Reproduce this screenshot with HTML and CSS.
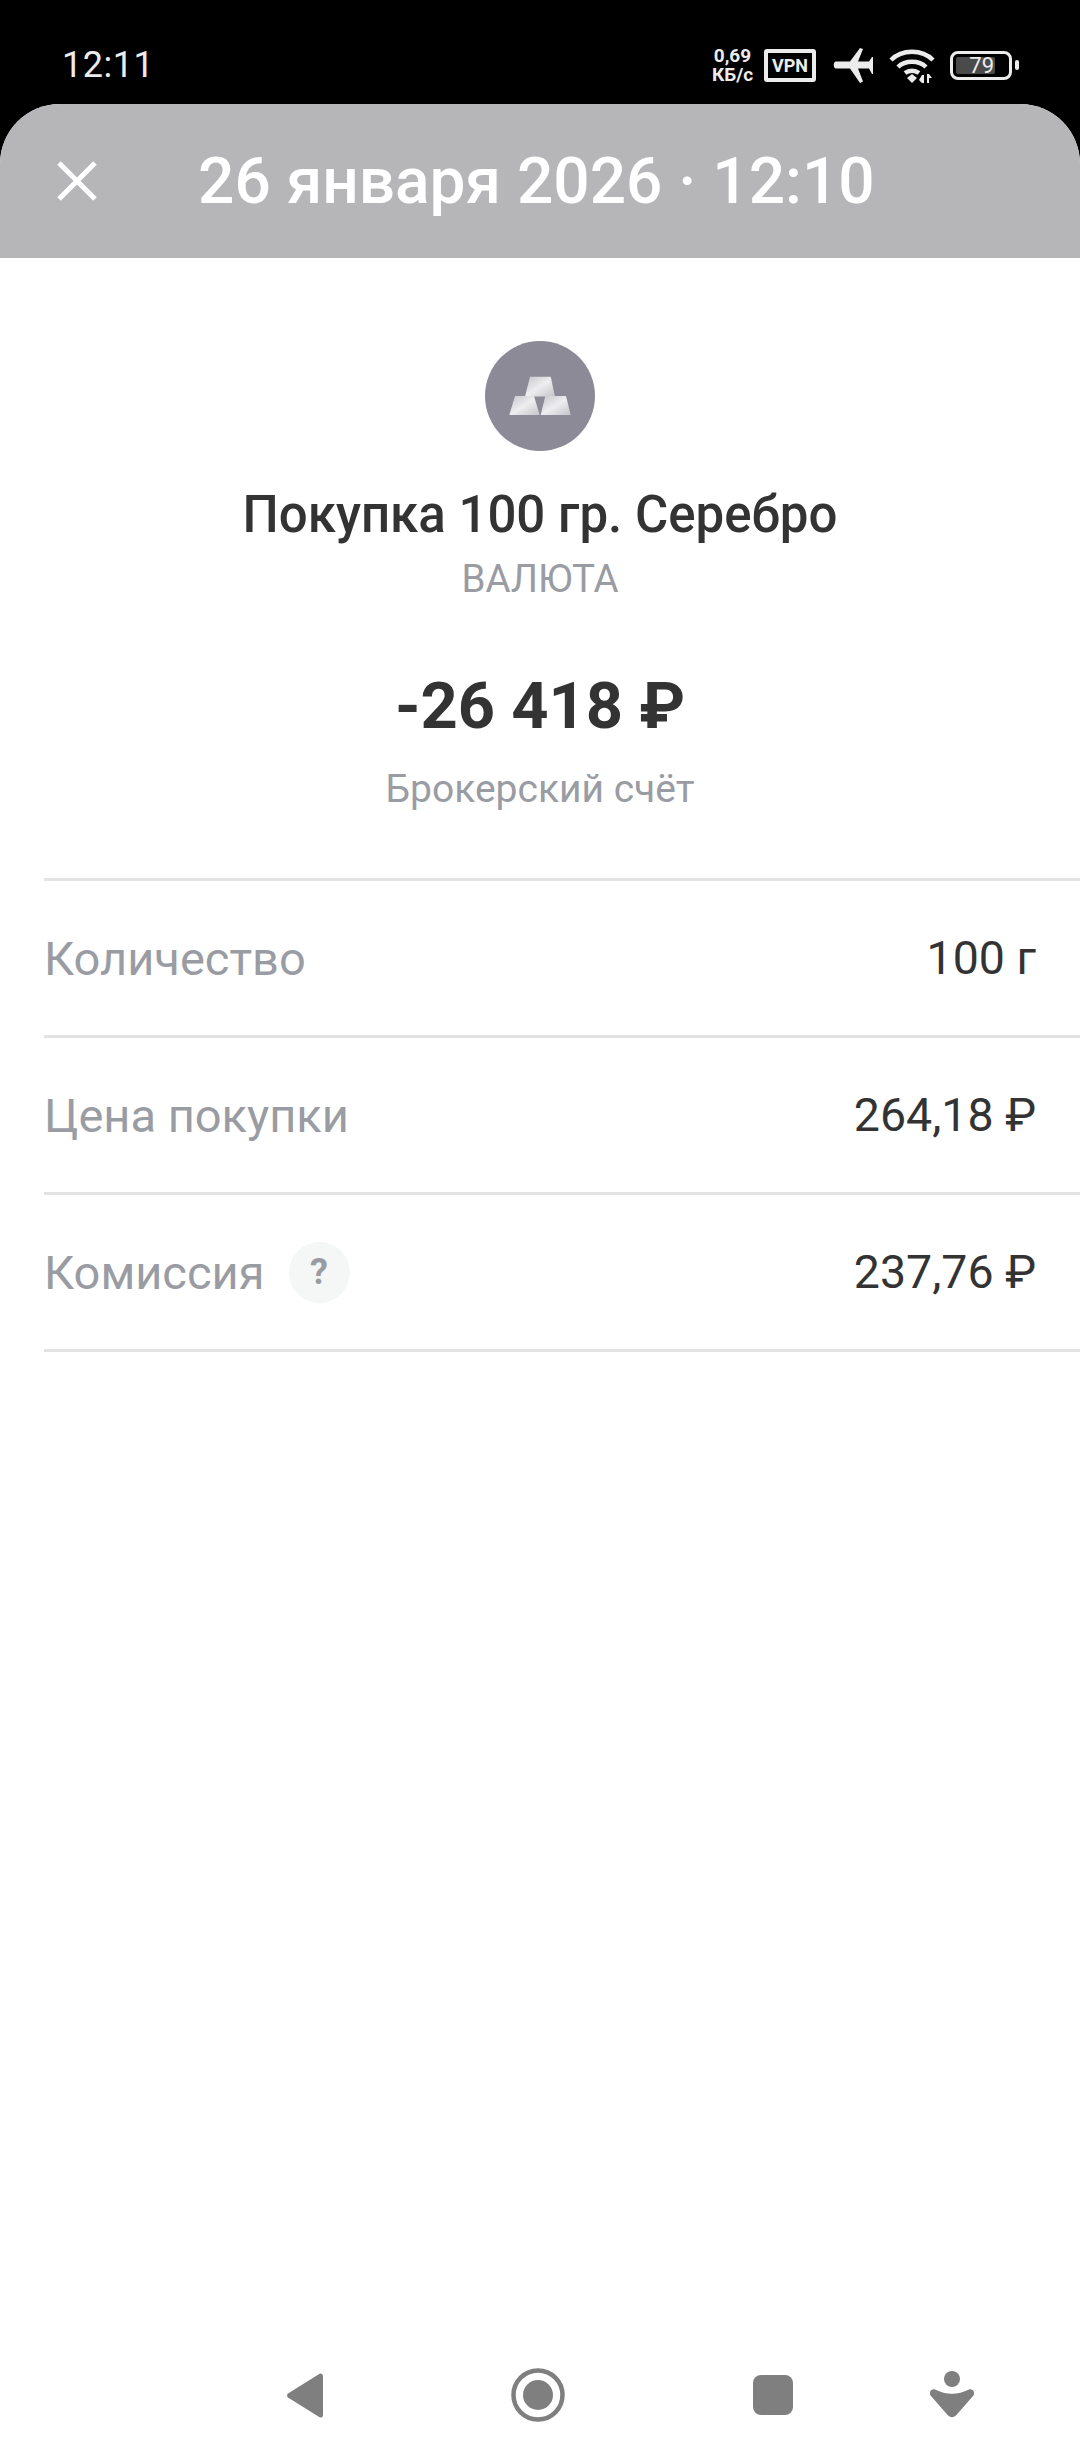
FILE: index.html
```html
<!DOCTYPE html>
<html lang="ru">
<head>
    <meta charset="UTF-8">
    <meta name="viewport" content="width=device-width, initial-scale=1.0">
    <title>Покупка 100 гр. Серебро</title>
    <link rel="stylesheet" href="styles.css">
</head>
<body>
    <div class="status-bar">
        <span class="status-time">12:11</span>
        <div class="status-icons">
            <span class="net-speed">0,69<br>КБ/с</span>
            <span class="vpn">VPN</span>
            <svg class="plane" width="40" height="35" viewBox="0 0 40 35">
                <path fill="#ececec" d="M27 0 L30 1 L25 13.5 L36 13.5 L39 9 L40 9 L40 26 L39 26 L36 20.5 L25 20.5 L30 33.5 L27 35 L17 20.5 L3 20.5 C0 20.5 0 13.5 3 13.5 L17 13.5 Z"/>
            </svg>
            <svg class="wifi" width="46" height="35" viewBox="0 0 46 35">
                <g fill="none" stroke="#ececec" stroke-width="4.5">
                    <path d="M2 12 C13 1 33 1 44 12"/>
                    <path d="M9 19 C16 12 30 12 37 19"/>
                    <path d="M16 25 C20 22 26 22 30 25"/>
                </g>
                <path fill="#ececec" d="M18 30 L23 26 L28 30 L23 35 Z"/>
                <path fill="#ececec" d="M33 27 L35 27 L35 35 L33 35 L30 32 Z M38 26 L40 26 L43 30 L40 30 L40 35 L38 35 Z"/>
            </svg>
            <div class="battery">
                <div class="battery-body">
                    <span class="battery-level">79</span>
                </div>
                <span class="battery-tip"></span>
            </div>
        </div>
    </div>

    <div class="sheet">
        <div class="sheet-header">
            <svg class="close-icon" width="40" height="40" viewBox="0 0 40 40">
                <path d="M2 2 L38 38 M38 2 L2 38" stroke="#fff" stroke-width="5" fill="none"/>
            </svg>
            <span class="sheet-title">26 января 2026 · 12:10</span>
        </div>

        <div class="summary">
            <svg class="asset-icon" width="110" height="110" viewBox="0 0 110 110">
                <defs>
                    <linearGradient id="silver" x1="0" y1="0" x2="1" y2="1">
                        <stop offset="0" stop-color="#c4c4ca"/>
                        <stop offset="0.5" stop-color="#eeeef0"/>
                        <stop offset="1" stop-color="#c4c4ca"/>
                    </linearGradient>
                </defs>
                <circle cx="55" cy="55" r="55" fill="#8b8a96"/>
                <path fill="url(#silver)" d="M45 35.7 L65.7 35.7 L70 55.5 L40 55.5 Z"/>
                <path fill="url(#silver)" d="M30 55 L49 55 L54.7 74 L24.3 74 Z"/>
                <path fill="url(#silver)" d="M60.3 55 L81 55 L85.7 74 L55.7 74 Z"/>
            </svg>
            <h1 class="summary-title">Покупка 100 гр. Серебро</h1>
            <p class="summary-type">ВАЛЮТА</p>
            <p class="summary-amount">-26 418 ₽</p>
            <p class="summary-account">Брокерский счёт</p>
        </div>

        <div class="details">
            <div class="row">
                <span class="row-label">Количество</span>
                <span class="row-value">100 г</span>
            </div>
            <div class="row">
                <span class="row-label">Цена покупки</span>
                <span class="row-value">264,18 ₽</span>
            </div>
            <div class="row">
                <span class="row-label">Комиссия <span class="help">?</span></span>
                <span class="row-value">237,76 ₽</span>
            </div>
        </div>

        <div class="nav-bar">
            <div class="nav-main">
                <svg width="36" height="45" viewBox="0 0 36 45">
                    <path fill="#7f7f7f" d="M33 0.5 Q36 0 36 3 L36 42 Q36 45 33 44.5 L1 24.5 Q-1 22.5 1 20.5 Z"/>
                </svg>
                <svg width="54" height="54" viewBox="0 0 54 54">
                    <circle cx="27" cy="27" r="24.5" fill="none" stroke="#7f7f7f" stroke-width="4.5"/>
                    <circle cx="27" cy="27" r="15" fill="#7f7f7f"/>
                </svg>
                <span class="nav-square"></span>
            </div>
            <svg class="nav-extra" width="44" height="47" viewBox="0 0 44 47">
                <circle cx="22" cy="8" r="8" fill="#7f7f7f"/>
                <path fill="#7f7f7f" d="M5 18.5 Q22 27 39 18.5 C43 17.5 46 22 43 25 L26 44.5 Q22 48 18 44.5 L1 25 C-2 22 1 17.5 5 18.5 Z"/>
            </svg>
        </div>
    </div>
</body>
</html>
```

FILE: styles.css
```css
/* Reset */
body, h1, p {
    margin: 0;
    padding: 0;
}

body {
    width: 1080px;
    height: 2460px;
    display: flex;
    flex-direction: column;
    background-color: #000;
    font-family: Roboto, "Noto Sans", sans-serif;
    overflow: hidden;
}

/* Status bar */
.status-bar {
    height: 104px;
    box-sizing: border-box;
    display: flex;
    align-items: center;
    justify-content: space-between;
    padding: 26px 61px 0 62px;
    color: #ececec;
}

.status-time {
    font-size: 36px;
    letter-spacing: 0.5px;
}

.status-icons {
    display: flex;
    align-items: center;
}

.net-speed {
    width: 41px;
    font-size: 19px;
    font-weight: 700;
    line-height: 19px;
    text-align: center;
    white-space: nowrap;
    margin-right: 11px;
}

.vpn {
    width: 52px;
    height: 33px;
    box-sizing: border-box;
    border: 4px solid #ececec;
    border-radius: 3px;
    font-size: 18px;
    font-weight: 700;
    line-height: 25px;
    text-align: center;
    margin-right: 17px;
}

.plane {
    margin-right: 16px;
}

.wifi {
    margin-right: 15px;
}

.battery {
    display: flex;
    align-items: center;
    gap: 3px;
}

.battery-body {
    width: 62px;
    height: 29px;
    box-sizing: border-box;
    border: 3px solid #ececec;
    border-radius: 8px;
    padding: 3px;
}

.battery-level {
    display: block;
    width: 39px;
    height: 17px;
    background-color: #4a4a4a;
    border-radius: 2px;
    font-size: 22px;
    line-height: 17px;
    text-align: right;
    padding-right: 1px;
    box-sizing: border-box;
}

.battery-tip {
    width: 4px;
    height: 10px;
    background-color: #ececec;
    border-radius: 2px;
}

/* White sheet */
.sheet {
    flex: 1;
    display: flex;
    flex-direction: column;
    background-color: #fff;
    border-radius: 60px 60px 0 0;
    overflow: hidden;
}

.sheet-header {
    height: 154px;
    display: flex;
    align-items: center;
    background-color: #b6b6b8;
    padding-left: 57px;
}

.close-icon {
    margin-right: 101px;
}

.sheet-title {
    font-size: 64px;
    font-weight: 500;
    color: #fff;
}

/* Summary */
.summary {
    display: flex;
    flex-direction: column;
    align-items: center;
    padding-top: 83px;
    height: 620px;
    box-sizing: border-box;
}

.asset-icon {
    margin-bottom: 36px;
}

.summary-title {
    font-size: 51px;
    font-weight: 500;
    line-height: 56px;
    color: #333;
}

.summary-type {
    font-size: 38.5px;
    line-height: 44px;
    margin-top: 14px;
    color: #9a9ca3;
}

.summary-amount {
    font-size: 65px;
    font-weight: 700;
    line-height: 76px;
    margin-top: 67px;
    color: #333;
}

.summary-account {
    font-size: 39px;
    line-height: 44px;
    margin-top: 23px;
    color: #9a9ca3;
}

/* Detail rows */
.details {
    margin-left: 44px;
    border-top: 3px solid #e3e3e3;
}

.row {
    height: 157px;
    box-sizing: border-box;
    display: flex;
    align-items: center;
    justify-content: space-between;
    padding-right: 44px;
    border-bottom: 3px solid #e3e3e3;
}

.row-label {
    display: flex;
    align-items: center;
    gap: 24px;
    font-size: 47px;
    color: #9a9ca3;
}

.row-value {
    font-size: 46.5px;
    color: #333;
}

.help {
    width: 61px;
    height: 61px;
    border-radius: 50%;
    background-color: #f5f7f7;
    font-size: 36px;
    font-weight: 700;
    line-height: 61px;
    text-align: center;
}

/* Navigation bar */
.nav-bar {
    margin-top: auto;
    height: 92px;
    padding-left: 287px;
    display: flex;
    align-items: flex-start;
}

.nav-main {
    display: flex;
    align-items: center;
    gap: 188px;
    height: 54px;
}

.nav-square {
    width: 40px;
    height: 40px;
    border-radius: 8px;
    background-color: #7f7f7f;
}

.nav-extra {
    margin-left: 137px;
    margin-top: 3px;
}
```
